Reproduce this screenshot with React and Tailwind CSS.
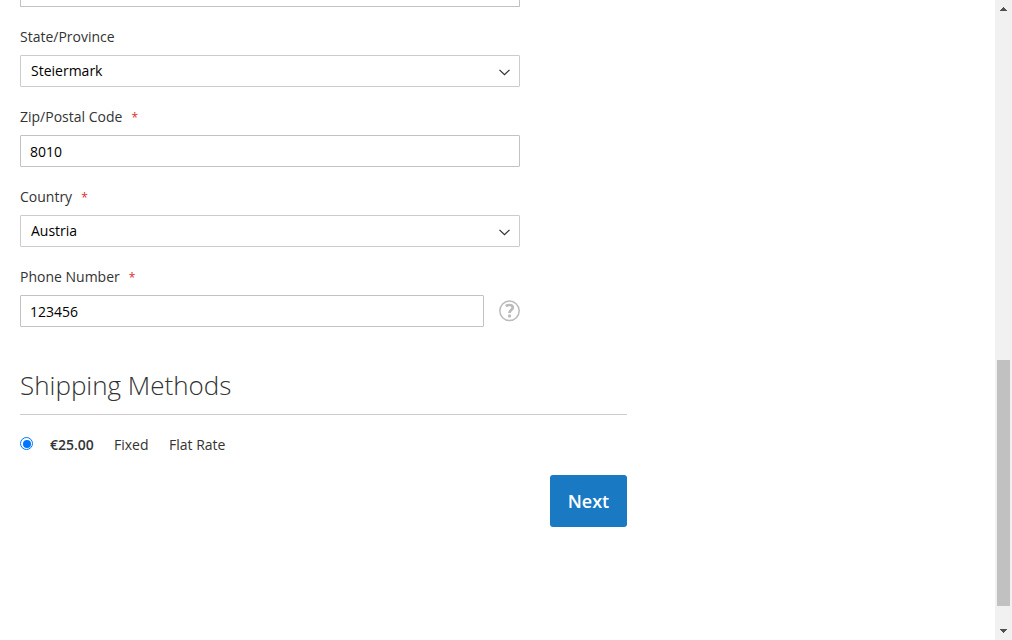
import React from 'react';

function Field({ label, required, children }) {
  return (
    <div className="mb-5 h-[60px] w-[500px]">
      <label className="mb-2 flex h-5 items-center text-sm leading-5 text-[#333333]">
        {label}
        {required && <span className="ml-[9px] pt-0.5 text-xs leading-5 text-[#e02b27]">*</span>}
      </label>
      {children}
    </div>
  );
}

function Select({ value }) {
  return (
    <div className="flex h-8 items-center justify-between rounded-[1px] border border-[#cccccc] pr-[9px] pl-[10px] text-sm text-black">
      <span className="leading-5">{value}</span>
      <svg className="mt-[3px] h-[7px] w-[11px]" viewBox="0 0 11 7" fill="none" stroke="#303030" strokeWidth="1.3">
        <path d="M0.5 0.9 L5.5 5.6 L10.5 0.9" />
      </svg>
    </div>
  );
}

function Input({ value, className }) {
  return (
    <input
      type="text"
      defaultValue={value}
      className={`block h-8 rounded-[1px] border border-[#c2c2c2] bg-white px-[9px] text-sm text-black outline-none ${className}`}
    />
  );
}

function Scrollbar() {
  return (
    <div className="flex h-full w-[17px] flex-col items-center justify-between bg-[#f1f1f1]">
      <svg className="mt-[7px] h-1 w-[7px]" viewBox="0 0 7 4" fill="#505050" shapeRendering="crispEdges">
        <path d="M3 0h1v1h1v1h1v1h1v1H0V3h1V2h1V1h1z" />
      </svg>
      <div className="mt-[349px] mb-auto h-[246px] w-[13px] bg-[#c1c1c1]" />
      <svg className="mb-[7px] h-1 w-[7px]" viewBox="0 0 7 4" fill="#505050" shapeRendering="crispEdges">
        <path d="M0 0h7v1H6v1H5v1H4v1H3V3H2V2H1V1H0z" />
      </svg>
    </div>
  );
}

export default function App() {
  return (
    <div className="flex h-[640px] w-[1012px] justify-between overflow-hidden bg-white font-['Open_Sans',sans-serif] text-[#333333]">
      <main className="w-[627px] pl-5">
        <div className="mb-5 h-[7px] w-[500px] rounded-b-[1px] border border-t-0 border-[#c2c2c2]" />
        <Field label="State/Province">
          <Select value="Steiermark" />
        </Field>
        <Field label="Zip/Postal Code" required>
          <Input value="8010" className="w-full" />
        </Field>
        <Field label="Country" required>
          <Select value="Austria" />
        </Field>
        <Field label="Phone Number" required>
          <div className="flex items-start justify-between">
            <Input value="123456" className="w-[464px]" />
            <svg className="mt-[5px] h-[22px] w-[21px]" viewBox="0 0 21 22" fill="none" stroke="#bbbbbb">
              <circle cx="10.5" cy="10.8" r="9.7" strokeWidth="1.5" />
              <path d="M6.8 6.2 C8 5.3 9.2 5 10.4 5 C12.6 5 13.8 6 13.8 7.6 C13.8 10 10.5 9.8 10.5 12.9" strokeWidth="2.7" />
              <rect x="9" y="14.6" width="3" height="2.9" rx="0.8" fill="#bbbbbb" stroke="none" />
            </svg>
          </div>
        </Field>
        <h2 className="mt-10 h-[48px] border-b border-[#cccccc] text-[26px] leading-[37px] font-light">Shipping Methods</h2>
        <div className="mt-5 flex h-5 items-center text-sm leading-5">
          <span className="mr-[17px] mb-[3px] flex h-[13px] w-[13px] items-center justify-center rounded-full border border-[#0075ff]">
            <span className="h-[8px] w-[8px] rounded-full bg-[#0075ff]" />
          </span>
          <span className="w-16 font-semibold">€25.00</span>
          <span className="w-[55px]">Fixed</span>
          <span>Flat Rate</span>
        </div>
        <div className="mt-5 flex justify-end">
          <button className="h-[52px] w-[77px] rounded-[3px] bg-[#1979c3] text-lg font-semibold text-white">Next</button>
        </div>
      </main>
      <Scrollbar />
    </div>
  );
}
